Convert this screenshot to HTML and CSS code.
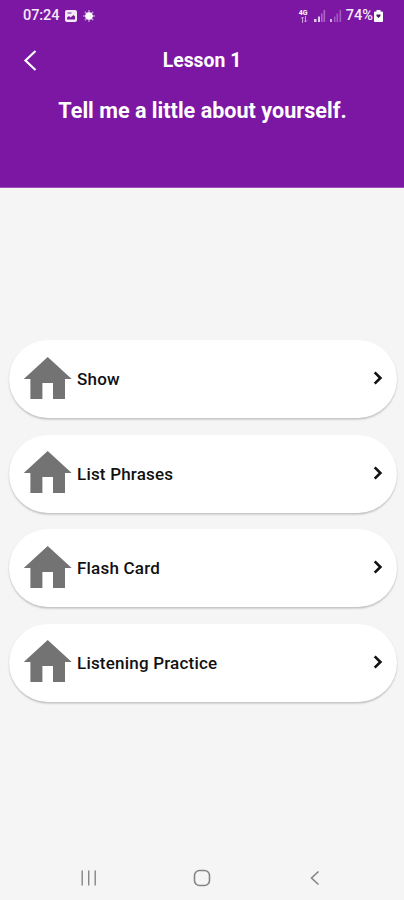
FILE: index.html
```html
<!DOCTYPE html>
<html lang="en">
<head>
<meta charset="utf-8">
<title>Lesson 1</title>
<link rel="stylesheet" href="styles.css">
</head>
<body>
<svg class="defs" width="0" height="0" aria-hidden="true">
  <symbol id="house" viewBox="0 0 48 42"><path fill="#737373" d="M23.700 0 47.700 22H41V42H29V26H18.400V42H6.400V22H-.3Z"/></symbol>
  <symbol id="chevron" viewBox="0 0 10 14"><path fill="none" stroke="#111" stroke-width="2.600" d="M1.700 1.300 7.400 7 1.700 12.700"/></symbol>
</svg>
<header class="header">
  <div class="status">
    <span class="clock">07:24</span>
    <svg class="picture" width="12" height="12" viewBox="0 0 12 12"><rect width="12" height="12" rx="2" fill="#f5eafa"/><path fill="#7b17a3" d="M2 9.500V7.500L4 6l1.500 1.500L8.500 5 10 6.500v3Z"/><path stroke="#7b17a3" d="M2.500 3h4"/></svg>
    <svg class="sun" width="12" height="12" viewBox="0 0 12 12"><path stroke="#c18fd6" stroke-width="1.500" d="M6 0v12M0 6h12M1.800 1.800l8.400 8.400M10.200 1.800l-8.400 8.400"/><circle cx="6" cy="6" r="3.800" fill="#fff"/></svg>
    <div class="system">
      <div class="network"><span class="generation">4G</span>
        <svg width="8" height="7" viewBox="0 0 8 7"><path fill="none" stroke="#c99bdd" d="M2.500 7V1M1 2.500 2.500 1 4 2.500M5.500 0v6M4 4.500 5.500 6 7 4.500"/></svg>
      </div>
      <svg class="signal" width="12" height="12" viewBox="0 0 12 12"><path fill="#e3c9ef" d="M0 9h2.500v3H0zM4 6.500h2V12H4z"/><path fill="#a964c5" d="M7 3.500h1.600V12H7zM9.500 0h1.600v12H9.500z"/></svg>
      <svg class="signal second" width="12" height="12" viewBox="0 0 12 12"><path fill="#d5b0e5" d="M0 9h2v3H0z"/><path fill="#a45bc1" d="M4 6.500h1.500V12H4zM6.500 3.500h1.600V12H6.500zM9.500 0h1.600v12H9.500z"/></svg>
      <span class="percent">74%</span>
      <svg class="battery" width="9" height="12" viewBox="0 0 9 12"><path fill="#fff" d="M2.500 0h4v1.500H8a1 1 0 0 1 1 1V11a1 1 0 0 1-1 1H1a1 1 0 0 1-1-1V2.500a1 1 0 0 1 1-1h1.500z"/><path fill="#4b1762" d="M2.500 4.500h4V6L4.500 8l-2-2z"/></svg>
    </div>
  </div>
  <div class="toolbar">
    <svg class="back" width="14" height="22" viewBox="0 0 14 22"><path fill="none" stroke="#fff" stroke-width="2.200" d="M12.500 1 2.500 10.500 12.500 20"/></svg>
    <h1 class="title">Lesson 1</h1>
  </div>
  <p class="prompt">Tell me a little about yourself.</p>
</header>
<main class="menu">
  <div class="card"><svg class="house"><use href="#house"/></svg><span class="label">Show</span><svg class="chevron"><use href="#chevron"/></svg></div>
  <div class="card"><svg class="house"><use href="#house"/></svg><span class="label">List Phrases</span><svg class="chevron"><use href="#chevron"/></svg></div>
  <div class="card"><svg class="house"><use href="#house"/></svg><span class="label">Flash Card</span><svg class="chevron"><use href="#chevron"/></svg></div>
  <div class="card"><svg class="house"><use href="#house"/></svg><span class="label">Listening Practice</span><svg class="chevron"><use href="#chevron"/></svg></div>
</main>
<nav class="navbar">
  <svg width="16" height="16" viewBox="0 0 16 16"><path stroke="#858585" stroke-width="1.400" d="M1.200 .5v15M7.700 .5v15M14.200 .5v15"/></svg>
  <svg width="18" height="18" viewBox="0 0 18 18"><rect x="1.500" y="1.500" width="15" height="15" rx="5" fill="none" stroke="#858585" stroke-width="1.600"/></svg>
  <svg width="16" height="16" viewBox="0 0 16 16"><path fill="none" stroke="#858585" stroke-width="1.600" d="M11.500 1.500 4.500 8l7 6.500"/></svg>
</nav>
</body>
</html>
```
FILE: styles.css
```css
* { box-sizing: border-box; }
body {
  margin: 0;
  height: 900px;
  display: flex;
  flex-direction: column;
  background: #f5f5f5;
  font-family: Roboto, "Liberation Sans", sans-serif;
  overflow: hidden;
}
svg { display: block; flex: none; }
.defs { position: absolute; }
.header {
  height: 188px;
  flex: none;
  background: #7b17a3;
  border-bottom: 1px solid #9c50ba;
  color: #fff;
}
.status {
  height: 32px;
  padding: 0 21px 0 23px;
  display: flex;
  align-items: center;
}
.clock, .percent { font-size: 14.5px; line-height: 32px; font-weight: 500; color: #f5eafa; }
.clock { width: 42px; letter-spacing: -.1px; }
.sun { margin-left: 6px; }
.system { margin-left: auto; display: flex; align-items: center; }
.network { width: 10px; margin-right: 5px; }
.network svg { margin-left: 1px; }
.generation { display: block; font-size: 7px; line-height: 6px; font-weight: 700; }
.signal { margin-right: 4px; }
.second { margin-right: 4px; }
.percent { margin-right: 1px; }
.toolbar {
  height: 57px;
  padding: 0 23px;
  display: grid;
  grid-template-columns: 14px 1fr 14px;
  align-items: center;
}
.title { margin: 1px 0 0; text-align: center; font-size: 19.4px; line-height: 56px; font-weight: 700; }
.prompt {
  margin: 7px 0 0;
  padding-left: 1px;
  text-align: center;
  font-size: 21.6px;
  line-height: 30px;
  font-weight: 700;
  white-space: nowrap;
}
.menu {
  padding: 152px 7px 0 9px;
  display: flex;
  flex-direction: column;
  gap: 16.5px;
}
.card {
  height: 78px;
  padding: 0 14px 0 14.5px;
  display: flex;
  align-items: center;
  border-radius: 39px;
  background: #fff;
  box-shadow: 0 1.5px 2px rgba(0, 0, 0, .22);
}
.house { width: 48px; height: 42px; margin-top: -2.4px; }
.label { margin-left: 5.5px; font-size: 17px; line-height: 24px; font-weight: 500; letter-spacing: .2px; color: #111; }
.chevron { width: 10px; height: 14px; margin: -1.2px 0 0 auto; }
.navbar {
  height: 45px;
  margin-top: auto;
  padding: 0 81px 0 81px;
  display: flex;
  justify-content: space-between;
  align-items: center;
}
```
